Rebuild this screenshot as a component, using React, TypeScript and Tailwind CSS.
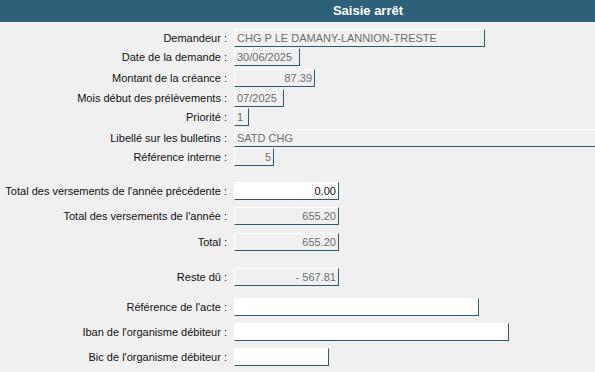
type Field = {
  label: string;
  value: string;
  width: string;
  mt: string;
  align?: "left" | "right";
  editable?: boolean;
};

const fields: Field[] = [
  { label: "Demandeur", value: "CHG P LE DAMANY-LANNION-TRESTE", width: "w-[251px]", mt: "mt-[7px]" },
  { label: "Date de la demande", value: "30/06/2025", width: "w-[66px]", mt: "mt-[1px]" },
  { label: "Montant de la créance", value: "87.39", width: "w-[81px]", mt: "mt-[3px]", align: "right" },
  { label: "Mois début des prélèvements", value: "07/2025", width: "w-[50px]", mt: "mt-[2px]" },
  { label: "Priorité", value: "1", width: "w-[15px]", mt: "mt-[1px]" },
  { label: "Libellé sur les bulletins", value: "SATD CHG", width: "w-[400px]", mt: "mt-[3px]" },
  { label: "Référence interne", value: "5", width: "w-[40px]", mt: "mt-[1px]", align: "right" },
  { label: "Total des versements de l'année précédente", value: "0.00", width: "w-[105px]", mt: "mt-[16px]", align: "right", editable: true },
  { label: "Total des versements de l'année", value: "655.20", width: "w-[105px]", mt: "mt-[7px]", align: "right" },
  { label: "Total", value: "655.20", width: "w-[105px]", mt: "mt-[8px]", align: "right" },
  { label: "Reste dû", value: "- 567.81", width: "w-[105px]", mt: "mt-[17px]", align: "right" },
  { label: "Référence de l'acte", value: "", width: "w-[245px]", mt: "mt-[12px]", editable: true },
  { label: "Iban de l'organisme débiteur", value: "", width: "w-[275px]", mt: "mt-[7px]", editable: true },
  { label: "Bic de l'organisme débiteur", value: "", width: "w-[95px]", mt: "mt-[7px]", editable: true },
];

export default function App() {
  return (
    <div className="w-[595px] h-[372px] overflow-hidden bg-[#f0f0f0] text-[11px] text-[#111] font-['Liberation_Sans',Arial,sans-serif]">
      <div className="flex h-[22px] items-center justify-center bg-[#2e6179] pl-[141px] text-[13px] font-bold text-white">
        Saisie arrêt
      </div>

      <div className="flex flex-col">
        {fields.map((f) => (
          <div key={f.label} className={`flex h-[18px] items-center ${f.mt}`}>
            <span className="w-[229px] shrink-0 whitespace-nowrap pr-[2px] text-right">{f.label} :</span>
            <div
              className={`ml-[5px] flex h-[18px] shrink-0 items-center overflow-hidden whitespace-nowrap border border-t-white border-l-white border-r-[#2c5a70] border-b-[#2c5a70] px-[2px] ${f.width} ${
                f.align === "right" ? "justify-end" : "justify-start"
              } ${f.editable ? "bg-white text-[#111]" : "bg-[#f0f0f0] text-[#6e6e6e]"}`}
            >
              {f.value}
            </div>
          </div>
        ))}
      </div>
    </div>
  );
}
